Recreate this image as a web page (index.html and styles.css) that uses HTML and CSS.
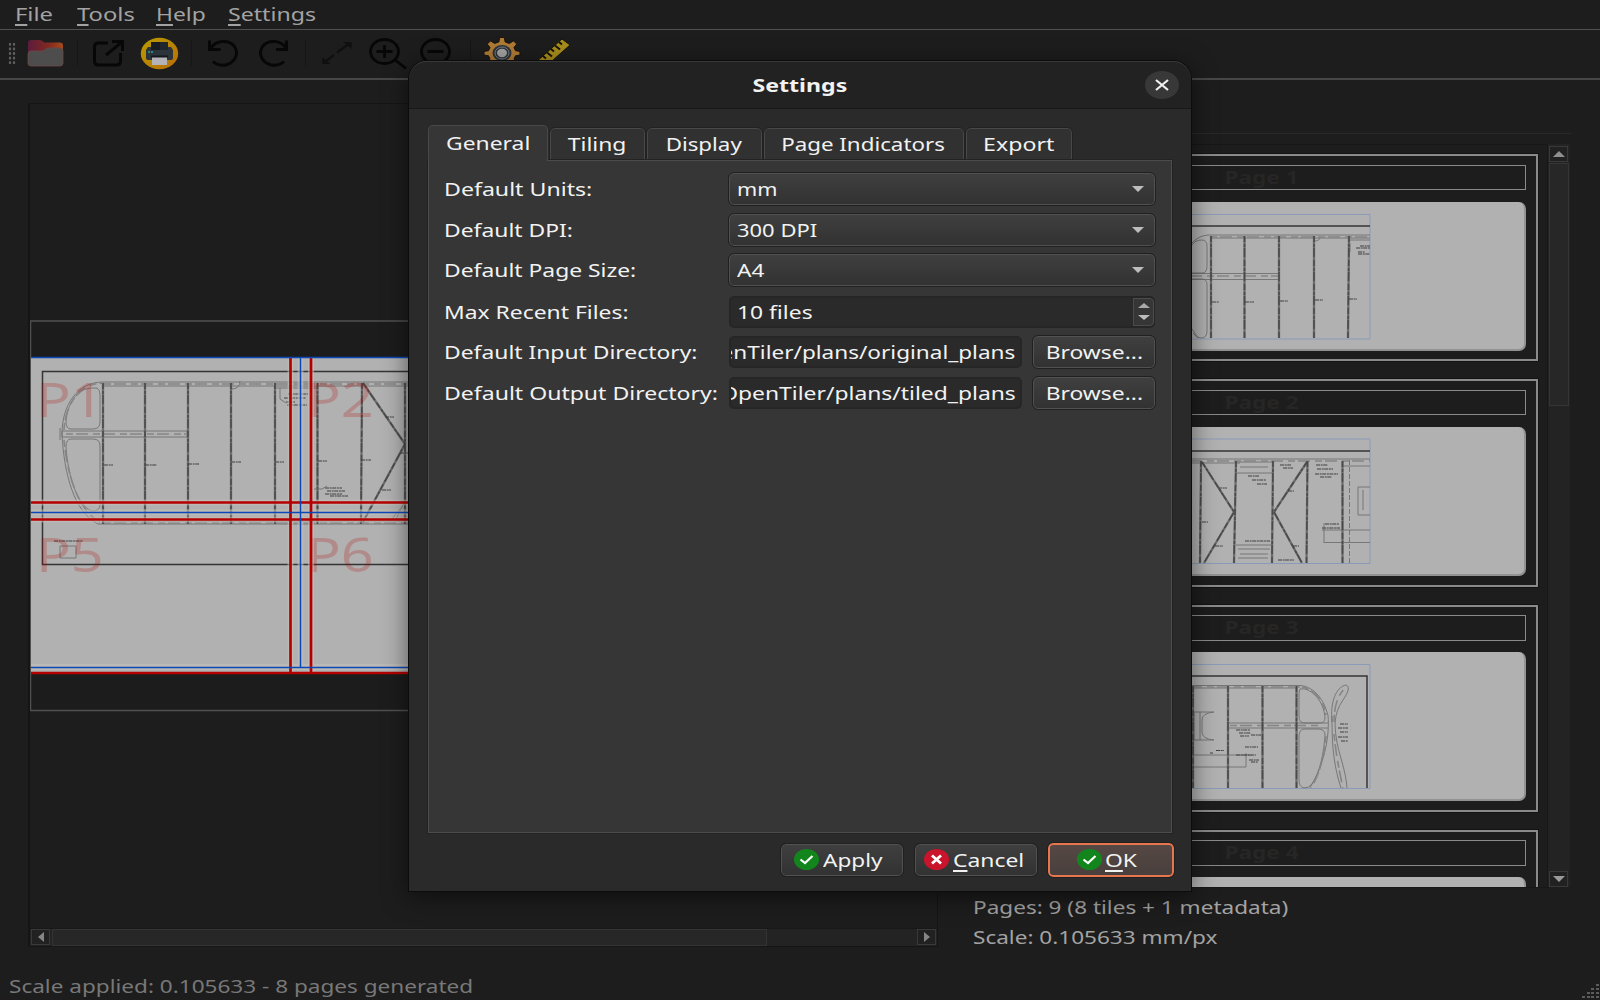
FILE: index.html
```html
<!DOCTYPE html>
<html lang="en">
<head>
<meta charset="utf-8">
<title>OpenTiler</title>
<link rel="stylesheet" href="styles.css">
</head>
<body>
<div class="app">
  <nav class="menubar">
    <span class="menu file"><span class="t k132"><u>F</u>ile</span></span>
    <span class="menu tools"><span class="t k132"><u>T</u>ools</span></span>
    <span class="menu help"><span class="t"><u>H</u>elp</span></span>
    <span class="menu"><span class="t k129"><u>S</u>ettings</span></span>
  </nav>

  <div class="toolbar">
    <span class="handle"></span>
    <span class="tool"><svg width="37" height="28" viewBox="0 0 37 28">
      <defs><linearGradient id="fold" x1="0" x2="1"><stop offset="0" stop-color="#5c1c3c"/><stop offset=".6" stop-color="#82291f"/><stop offset="1" stop-color="#a84a1c"/></linearGradient></defs>
      <path d="M1 4q0-3 3-3h9q2 0 3 1.500l1 1h16q3 0 3 3v15H1z" fill="url(#fold)"/>
      <path d="M1 15q0-3 3-3h11q2 0 3-1.500t3-1.500h12q3 0 3 3v12q0 3-3 3H4q-3 0-3-3z" fill="#4d4d4d" stroke="#6a4a44" stroke-width=".8"/></svg></span>
    <span class="sep"></span>
    <span class="tool"><svg width="33" height="28" viewBox="0 0 33 28" fill="none" stroke="#070707" stroke-width="3">
      <path d="M16 4H6.500Q2.500 4 2.500 8v14q0 4 4 4h18q4 0 4-4V14"/><path d="M14 16 30 3"/><path d="M20 2.500h10.500V12"/></svg></span>
    <span class="tool"><svg width="39" height="33" viewBox="0 0 39 33">
      <defs><linearGradient id="sun" x1="0" x2="1" y2="1"><stop offset="0" stop-color="#b99c00"/><stop offset="1" stop-color="#b96d06"/></linearGradient></defs>
      <ellipse cx="19.500" cy="16.500" rx="18.700" ry="15.700" fill="url(#sun)"/>
      <path d="M11 5h17v9H11z" fill="#171c22"/><path d="M20 5h8v9h-8z" fill="#20262d"/>
      <path d="M8 10h3v3h17v-3h3l2 3v8q0 2-2 2H8q-2 0-2-2v-8z" fill="#2b333b"/>
      <path d="M8 15h5" stroke="#22a58f" stroke-width="1.500" stroke-dasharray="2 1"/>
      <path d="M12 20h15v8H12z" fill="#b4b4b8"/><path d="M11 18.500h17v2H11z" fill="#15191e"/></svg></span>
    <span class="sep"></span>
    <span class="tool"><svg width="32" height="28" viewBox="0 0 32 28" fill="none" stroke="#070707" stroke-width="3">
      <path d="M2.500 1.500v9h11"/><path d="M3.500 9.500C9 .8 22 .5 27.500 7.500c5 7.500 0 16-8 18.200-5 1.200-10 0-13.500-3.200"/></svg></span>
    <span class="tool"><svg width="32" height="28" viewBox="0 0 32 28" fill="none" stroke="#070707" stroke-width="3">
      <path d="M28.500 1.500v9H18"/><path d="M28.500 9.500C23 .8 10 .5 4.500 7.500c-5 7.500 0 16 8 18.200 5 1.200 10 0 13.500-3.200"/></svg></span>
    <span class="sep"></span>
    <span class="tool"><svg width="32" height="26" viewBox="0 0 32 26" fill="none" stroke="#101010" stroke-width="1.200">
      <path d="M5 21 13 15M16 12.500 27 4.500" stroke-width="2.200"/><path d="M24 2.500h6v5zM2 18.500v5h6z" fill="#101010"/></svg></span>
    <span class="tool"><svg width="40" height="33" viewBox="0 0 40 33" fill="none" stroke="#070707" stroke-width="2.800">
      <ellipse cx="16.500" cy="14.500" rx="14" ry="12"/><path d="M26 22 38 31.500M8.500 14.500h16M16.500 8v13"/></svg></span>
    <span class="tool"><svg width="40" height="33" viewBox="0 0 40 33" fill="none" stroke="#070707" stroke-width="2.800">
      <ellipse cx="16.500" cy="14.500" rx="14" ry="12"/><path d="M26 22 38 31.500M8.500 14.500h16"/></svg></span>
    <span class="sep"></span>
    <span class="tool"><svg width="40" height="34" viewBox="-20 -17 40 34">
      <path fill="#b07c35" stroke="#120e08" stroke-width=".8" transform="scale(1.120 1)" d="M-2-15.500h4l.8 4.500 3.700 1.500 3.700-2.500 3 3-2.500 3.500 1.300 3.200 4 .8v3.500l-4 .8-1.300 3.200 2.500 3.500-3 3-3.700-2.500-3.700 1.500-.8 4.500h-4l-.8-4.500-3.700-1.500-3.700 2.500-3-3 2.500-3.500-1.300-3.200-4-.8v-3.500l4-.8 1.300-3.200-2.500-3.500 3-3 3.700 2.500 3.700-1.500z"/>
      <ellipse rx="9.500" ry="8" fill="#30343a"/><ellipse rx="7" ry="6" fill="none" stroke="#777c83" stroke-width="1"/><ellipse rx="5" ry="4.200" fill="#a3a3a3"/></svg></span>
    <span class="tool"><svg width="38" height="30" viewBox="0 0 38 30">
      <path d="M1 25 28 1l8 6L9 31z" fill="#a88d1c" stroke="#15120a" stroke-width="1"/>
      <path d="m9 18 3 2.500M13 14.500l5 4M17 11l3 2.500M21 7.500l5 4M25 4l3 2.500" stroke="#15120a" stroke-width="2"/></svg></span>
  </div>

  <main class="main">
    <section class="viewer">
      <div class="canvas">
        <svg width="910" height="392" viewBox="30 320 910 392">
          <rect x="30.500" y="321" width="900" height="389.500" fill="#1c1c1c" stroke="#505050" stroke-width="1.500"/>
          <path d="M31 357h900v317H31z" fill="#b1b1b1"/>
          <path d="M430 371.500H42.500V564.500H430" class="ink"/>
          <g class="thin">
            <path d="M430 382H103C78 382 62 404 62 434c2 40 12 78 36 90h332M430 386H104M430 521H104"/>
            <path d="M97 388q3 2 3 6v28q0 7-7 7H71q-5 0-5-7c1-17 10-34 27-34zM71 439h22q7 0 7 7v59q0 6-8 6c-14-4-24-34-26-64q0-8 5-8z"/>
            <path d="M62 431h125v6H62zM60 428v12M274 388h44M231 389q9 0 9-8M274 520h18"/>
            <path d="M60 546v12h16v-12zM395 521l9-18M390 521l10-12"/>
          </g>
          <path class="weave" d="M104 384h326M104 523h326M66 434h120M64 430c1-26 16-46 38-47M64 440c3 35 15 72 36 82"/>
          <path class="beam" d="M103 383v141M145 383v141M188 383v141M231 383v141M275 383v141M317.500 383v141M362 383l-1 141M405 383v141M363 383l42 61-42 78"/>
          <path class="grain" d="M103 383v141M145 383v141M188 383v141M231 383v141M275 383v141M317.500 383v141M362 383l-1 141M405 383v141M363 383l42 61-42 78"/>
          <path class="note" d="M104 465h9M145 465h12M188 464h11M231 462h10M275 462h9M318 461h9M361 460h10M385 417h9M382 490h9M288 394h20M284 398h22M286 402h9M287 405h20M325 488h17M327 491h18M325 494h17M330 496h18M54 541h29M400 453h8"/>
          <path class="thin" d="M280 388v11l6 4M314 489h8l5-3"/>
          <g class="pageno"><text transform="translate(36 417) scale(1.200 1)">P1</text><text transform="translate(306 417) scale(1.200 1)">P2</text><text transform="translate(36 572) scale(1.200 1)">P5</text><text transform="translate(306 572) scale(1.200 1)">P6</text></g>
          <path class="halo" d="M290.500 358v316M300.500 358v310M311 358v316M31 502.500h400M31 512.500h400M31 519.500h400M31 667h400"/>
          <path class="gutter" d="M290.500 357v317M311 357v317M31 502.500h400M31 519.500h400M31 673h400"/>
          <path class="cut" d="M31 357.500h400M300.500 357v310M31 512.500h400M31 667.500h400"/>
        </svg>
      </div>
      <div class="hbar">
        <span class="arrowbox"><svg width="8" height="10"><path d="M7 0v10L1 5z" fill="#858585"/></svg></span>
        <span class="hthumb"></span><span class="fill"></span>
        <span class="arrowbox"><svg width="8" height="10"><path d="M1 0v10l6-5z" fill="#858585"/></svg></span>
      </div>
    </section>

    <section class="side">
      <div class="listframe">
        <div class="list">
          <article class="card"><h3><span class="t k125">Page 1</span></h3><div class="thumb">
            <svg width="527" height="149" viewBox="998 201 527 149">
              <path class="guide" d="M1100 213.500h270v124.500h-270"/><path class="ink" d="M1100 225h270"/>
              <path class="thin" d="M1370 234H1208q-10 1-16 8M1370 237H1210M1180 272.500h99v6h-99M1192 244q3-5 10-5 5 0 5 6v20q0 7-5 7h-14M1188 278h14q5 0 5 6v46q0 7-6 7-5 0-8-5M1314 240q6 0 6-4M1350 239h20M1350 242v9M1192 328l6 9"/>
              <path class="weave" d="M1210 236h160M1180 275h98"/>
              <path class="beam" d="M1211 235v102M1244.500 235v102M1279 235v102M1314 235v102M1349 235l-1 102"/>
              <path class="grain" d="M1211 235v102M1244.500 235v102M1279 235v102M1314 235v102M1349 235l-1 102"/>
              <path class="note" d="M1212 301h7M1245 301h9M1280 300h8M1315 299h8M1349 298h8M1360 245h10M1356 247h14M1358 251h7M1358 253h12"/>
            </svg></div></article>
          <article class="card"><h3><span class="t k125">Page 2</span></h3><div class="thumb">
            <svg width="527" height="149" viewBox="998 427 527 149">
              <path class="guide" d="M1100 439h270v124.500h-270"/><path class="ink" d="M1100 451h270"/>
              <path class="thin" d="M1180 459h190M1180 463h60M1237 473h35M1237 462h35M1240 467h28M1370 487h-12v28h12M1324 523v20M1324 542.500h46M1322 530h48M1236 545h36M1238 549h32M1240 554h28M1238 558h30M1363 490v20M1342 466h28"/>
              <path class="thin" stroke-dasharray="5 2" d="M1349.500 460v103"/>
              <path class="weave" d="M1180 461h190"/>
              <path class="beam" d="M1201 461l-1 102M1236 461l-2 102M1273 461l-1 102M1307.500 461l-1 102M1342.500 461v102M1202 462l32 50-30 51M1307 462l-33 50 28 51"/>
              <path class="grain" d="M1201 461l-1 102M1236 461l-2 102M1273 461l-1 102M1307.500 461l-1 102M1342.500 461v102M1202 462l32 50-30 51M1307 462l-33 50 28 51"/>
              <path class="note" d="M1202 522h6M1218 488h9M1215 546h8M1288 491h6M1293 546h6M1280 465h11M1283 468h10M1248 476h11M1252 480h14M1257 484h10M1316 465h12M1317 469h16M1315 474h23M1320 477h12M1245 541h25M1325 524h14M1322 528h18M1278 560h16"/>
            </svg></div></article>
          <article class="card"><h3><span class="t k125">Page 3</span></h3><div class="thumb">
            <svg width="527" height="149" viewBox="998 652 527 149">
              <path class="guide" d="M1100 664.500h270V788.500h-270"/><path class="ink" d="M1100 676h267v112"/>
              <path class="thin" d="M1180 685.500h120c14 1 24 14 28 30 2 20-4 50-18 72M1180 688h118M1300 689q4-1 8 1c10 5 16 16 17 27 0 6-3 6-8 6h-12q-6 0-6-6v-22q0-5 1-6zM1305 729h13q7 0 7 6c-1 17-5 38-13 49q-3 4-8 4-5-1-5-8v-44q0-7 6-7z"/>
              <path class="thin" d="M1228 723h100M1228 728h100M1190 712h24q-12 1-12 8v12q0 7 12 8h-24M1194 712v28M1200 712v28M1182 755h70M1180 767h66v-14M1332 722c-2-20 4-35 14-37 5 2 1 9-3 15-10 14-8 28-7 36 2 17 10 34 11 52M1332 716c0 20 0 45 9 72"/>
              <path class="weave" d="M1180 687h120M1230 725.500h90M1334 722c0-16 4-27 11-34M1334 734c2 20 5 36 9 54M1302 687c12 2 22 14 24 28M1326 736c0 15-7 40-15 52"/>
              <path class="beam" d="M1193 686v102M1228 686v102M1262.500 686v102M1296.500 686v102"/>
              <path class="grain" d="M1193 686v102M1228 686v102M1262.500 686v102M1296.500 686v102"/>
              <path class="note" d="M1236 730h14M1239 733h12M1240 736h9M1251 735h10M1210 753h3M1216 750.500h8M1245 747h13M1236 755h20M1249 760h10M1251 762h7M1340 724h8M1338 728h10M1340 732h8M1338 737h10M1341 741h7"/>
            </svg></div></article>
          <article class="card"><h3><span class="t k125">Page 4</span></h3><div class="thumb"></div></article>
        </div>
        <div class="vbar">
          <span class="arrowbox up"><svg width="12" height="6"><path d="M0 6h12L6 0z" fill="#8f8f8f"/></svg></span>
          <span class="vthumb"></span><span class="fill"></span>
          <span class="arrowbox"><svg width="12" height="6"><path d="M0 0h12L6 6z" fill="#9a9a9a"/></svg></span>
        </div>
      </div>
      <p class="info"><span class="t k125">Pages: 9 (8 tiles + 1 metadata)</span></p>
      <p class="info"><span class="t k125">Scale: 0.105633 mm/px</span></p>
    </section>
  </main>

  <footer class="status"><span class="t k125">Scale applied: 0.105633 - 8 pages generated</span>
    <svg class="grip" width="18" height="16" fill="#5c5c5c"><path d="M14 0h3v2h-3zM9 4h3v2H9zM14 4h3v2h-3zM5 8h3v2H5zM9 8h3v2H9zM14 8h3v2h-3zM0 12h3v2H0zM5 12h3v2H5zM9 12h3v2H9zM14 12h3v2h-3z"/></svg>
  </footer>
</div>

<div class="dialog" role="dialog">
  <header class="titlebar"><b class="t c k129">Settings</b>
    <span class="close"><svg width="14" height="12" viewBox="0 0 14 12"><path d="M1 1l12 10M13 1 1 11" stroke="#f0f0f0" stroke-width="2.200"/></svg></span>
  </header>
  <div class="tabs">
    <span class="tab active"><span class="t c">General</span></span>
    <span class="tab tiling"><span class="t c">Tiling</span></span>
    <span class="tab display"><span class="t c k124">Display</span></span>
    <span class="tab indicators"><span class="t c k124">Page Indicators</span></span>
    <span class="tab export"><span class="t c k129">Export</span></span>
  </div>
  <div class="pane">
    <div class="row"><label><span class="t k129">Default Units:</span></label><div class="combo"><span class="t k120">mm</span><i class="down"></i></div></div>
    <div class="row"><label><span class="t">Default DPI:</span></label><div class="combo"><span class="t k122">300 DPI</span><i class="down"></i></div></div>
    <div class="row last"><label><span class="t">Default Page Size:</span></label><div class="combo"><span class="t k125">A4</span><i class="down"></i></div></div>
    <div class="row"><label><span class="t">Max Recent Files:</span></label><div class="field spin"><span class="t">10 files</span><span class="steps"><i class="upa"></i><i class="down"></i></span></div></div>
    <div class="row"><label><span class="t">Default Input Directory:</span></label><div class="field path"><span class="t r k125">OpenTiler/plans/original_plans</span></div><button class="browse"><span class="t c">Browse...</span></button></div>
    <div class="row"><label><span class="t k128">Default Output Directory:</span></label><div class="field path out"><span class="t r">OpenTiler/plans/tiled_plans</span></div><button class="browse"><span class="t c">Browse...</span></button></div>
  </div>
  <div class="actions">
    <button class="act"><svg width="25" height="21" viewBox="0 0 25 21"><ellipse cx="12.500" cy="10.500" rx="12.500" ry="10.500" fill="#12861d"/><path d="m6.500 10.500 4.500 3.500 7.500-7" fill="none" stroke="#fff" stroke-width="2.200"/></svg><span class="t k125">Apply</span></button>
    <button class="act cancel"><svg width="25" height="21" viewBox="0 0 25 21"><ellipse cx="12.500" cy="10.500" rx="12.500" ry="10.500" fill="#c9142b"/><path d="m8 6.500 9 8M17 6.500l-9 8" stroke="#fff" stroke-width="2.800"/></svg><span class="t"><u>C</u>ancel</span></button>
    <button class="act ok"><svg width="25" height="21" viewBox="0 0 25 21"><ellipse cx="12.500" cy="10.500" rx="12.500" ry="10.500" fill="#12861d"/><path d="m6.500 10.500 4.500 3.500 7.500-7" fill="none" stroke="#fff" stroke-width="2.200"/></svg><span class="t"><u>O</u>K</span></button>
  </div>
</div>
</body>
</html>
```
FILE: styles.css
```css
* { box-sizing: border-box; }
body { margin: 0; width: 1600px; height: 1000px; overflow: hidden; position: relative; background: #1d1d1d; font: 18px/24px "Noto Sans", "Open Sans", sans-serif; }
svg { display: block; flex: none; }
p, h3 { margin: 0; }

/* wide interface lettering */
.t { display: inline-block; white-space: nowrap; transform: scaleX(1.27); transform-origin: 0 50%; }
.t.c { transform-origin: 50% 50%; }
.t.r { transform-origin: 100% 50%; }
.t.k120 { transform: scaleX(1.2); }
.t.k122 { transform: scaleX(1.22); }
.t.k124 { transform: scaleX(1.24); }
.t.k125 { transform: scaleX(1.253); }
.t.k128 { transform: scaleX(1.28); }
.t.k129 { transform: scaleX(1.285); }
.t.k132 { transform: scaleX(1.32); }
u { text-decoration-thickness: 2px; text-underline-offset: 3px; text-decoration-skip-ink: none; }

.app { height: 1000px; display: flex; flex-direction: column; color: #a3a3a3; }
.menubar { height: 30px; display: flex; align-items: center; padding: 0 0 1px 15px; border-bottom: 1px solid #505050; flex: none; }
.menu { width: 72px; }
.menu.file { width: 62px; }
.menu.tools { width: 79px; }
.toolbar { height: 50px; display: flex; align-items: center; padding: 0 0 2px 8px; border-bottom: 2px solid #474747; flex: none; }
.handle { width: 8px; height: 23px; margin-right: 4px; background: radial-gradient(circle, #5f5f5f 1px, transparent 1.600px) 0 0 / 4px 4.600px; }
.tool { width: 51px; display: flex; justify-content: center; }
.sep { width: 12px; height: 26px; border-right: 1px solid #161616; margin-right: 5px; margin-left: -5px; }

.main { flex: 1; display: flex; min-height: 0; }
.viewer { width: 910px; height: 844px; margin: 23px 35px 0 28px; border: 1px solid #151515; border-left-width: 2px; display: flex; flex-direction: column; }
.canvas { height: 824px; padding-top: 216px; overflow: hidden; }
.hbar { height: 18px; display: flex; gap: 2px; background: #232323; padding: 0 1px; border-top: 1px solid #181818; }
.arrowbox { width: 19px; height: 16px; border: 1px solid #393939; display: flex; align-items: center; justify-content: center; background: #212121; flex: none; }
.hthumb { width: 715px; background: #272727; border: 1px solid #343434; }
.fill { flex: 1; }

.side { width: 600px; padding-top: 53px; display: flex; flex-direction: column; }
.listframe { width: 598px; height: 754px; border-top: 1px solid #292929; padding-top: 10px; display: flex; margin-bottom: 7px; }
.list { width: 575px; height: 744px; overflow: hidden; border: 1px solid #171717; padding: 9px 0 0 12px; display: flex; flex-direction: column; gap: 18px; }
.card { width: 552px; height: 207.300px; flex: none; border: 1.500px solid #8a8a8a; border-width: 2px 2px 2px 1px; padding: 8.500px 10px 0 11px; outline: 1px solid #131313; }
.card h3 { height: 25.500px; border: 1.500px solid #8a8a8a; font-size: 18px; line-height: 23px; text-align: center; color: #262626; }
.card h3 .t { transform-origin: 50% 50%; }
.thumb { margin-top: 11.500px; height: 149px; background: #b1b1b1; border-radius: 7px; border-right: 2px solid #929292; border-bottom: 2px solid #929292; overflow: hidden; }
.vbar { width: 22px; height: 743px; display: flex; flex-direction: column; gap: 1px; background: #232323; padding-left: 1px; padding-top: 2px; }
.vbar .arrowbox { height: 16px; }
.vthumb { height: 243px; width: 20px; background: #272727; border: 1px solid #353535; }
.info { height: 30px; line-height: 26px; }
.status { height: 33px; display: flex; align-items: center; justify-content: space-between; padding: 5px 0 0 9px; color: #787878; flex: none; }
.grip { align-self: flex-end; }

/* plan drawing */
.ink { fill: none; stroke: #343434; stroke-width: 1.500; }
.thin { fill: none; stroke: #707070; stroke-width: .9; }
.weave { fill: none; stroke: #858585; stroke-width: 1.600; stroke-dasharray: 7 3 12 5; }
.beam { fill: none; stroke: #6c6c6c; stroke-width: 2.300; }
.grain { fill: none; stroke: #4a4a4a; stroke-width: 1.500; stroke-dasharray: 6 2 3 1 9 3; }
.note { fill: none; stroke: #404040; stroke-width: 1.200; stroke-dasharray: 4 .7 2 .5; }
.pageno { font-size: 48px; fill: #b00000; fill-opacity: .22; }
.halo { fill: none; stroke: #c6c0b6; stroke-width: 6; opacity: .55; }
.gutter { fill: none; stroke: #b40000; stroke-width: 2.700; }
.cut { fill: none; stroke: #0b48b8; stroke-width: 1.500; }
.guide { fill: none; stroke: #8b9ab8; stroke-width: 1; }

.dialog { position: absolute; left: 409px; top: 61px; width: 782px; height: 830px; border-radius: 18px 18px 0 0; background: #2a2a2a; color: #f2f2f2; box-shadow: 0 0 0 1px #0c0c0c, 0 5px 26px rgba(0, 0, 0, .55); display: flex; flex-direction: column; }
.titlebar { height: 48px; background: #222; border-radius: 18px 18px 0 0; border-top: 1px solid #383838; border-bottom: 1px solid #181818; display: grid; grid-template-columns: 46px 1fr 46px; align-items: center; flex: none; }
.titlebar .t { grid-column: 2; justify-self: center; }
.close { width: 34px; height: 28px; border-radius: 50%; background: #383838; display: flex; align-items: center; justify-content: center; }
.tabs { height: 51px; padding: 16px 0 0 19px; display: flex; align-items: flex-end; flex: none; }
.tab { height: 32px; border: 1px solid #484848; border-bottom: 0; border-radius: 5px 5px 0 0; background: #313131; display: flex; align-items: center; justify-content: center; margin-right: 2px; padding-bottom: 1px; outline: 1px solid #222; }
.tab.active { width: 120px; height: 36px; background: #363636; position: relative; margin: 0 2px -1px 0; padding: 0 0 2px 0; outline: 0; z-index: 1; }
.tab.tiling { width: 95px; }
.tab.display { width: 115px; padding-right: 2px; }
.tab.indicators { width: 200px; padding-right: 2px; }
.tab.export { width: 106px; padding-right: 1px; }
.pane { width: 744px; height: 673px; margin-left: 19px; background: #363636; border: 1px solid #4c4c4c; padding: 12px 16px 0 15px; flex: none; box-shadow: 0 0 0 1px #232323; }
.row { display: flex; height: 32px; align-items: center; margin-bottom: 8.500px; }
.row.last { margin-bottom: 9.500px; }
label { width: 285px; flex: none; }
.combo, .field, .browse, .act { height: 32px; border: 1px solid #515151; border-radius: 5px; outline: 1px solid #202020; outline-offset: -.500px; background: linear-gradient(#3f3f3f, #323232); color: #f2f2f2; font: inherit; padding: 0 0 0 7px; display: flex; align-items: center; }
.combo, .spin { flex: 1; }
.combo { justify-content: space-between; padding-right: 10px; }
.field { height: 32px; background: #2a2a2a; border-color: #262626; overflow: hidden; outline: 0; border-width: 2px; }
.down { border: 6px solid transparent; border-top: 6px solid #bdbdbd; border-bottom: 0; }
.upa { border: 6px solid transparent; border-bottom: 5px solid #aaa; border-top: 0; }
.spin { justify-content: space-between; padding-left: 6px; border-right-width: 1px; }
.steps { width: 21px; height: 28px; background: #363636; border: 1px solid #4c4c4c; border-radius: 0 4px 4px 0; display: flex; flex-direction: column; align-items: center; justify-content: center; gap: 7px; }
.steps .down { border-top-width: 5px; }
.path { width: 293px; justify-content: flex-end; padding: 0 5px 0 0; margin-right: 11px; flex: none; }
.path.out { padding-right: 4px; }
.browse { flex: 1; justify-content: center; padding: 0; }
.actions { display: flex; padding: 10px 0 0 372px; align-items: center; gap: 12px; }
.act { width: 122px; padding-left: 12px; gap: 4px; flex: none; padding-bottom: 1px; }
.cancel { padding-left: 8px; }
.ok { width: 126px; height: 34px; padding-left: 27px; border: 2px solid #e6764e; background: linear-gradient(#564844, #483f3c); margin-left: -1px; }
.ok .t { margin-left: -1px; }
```
